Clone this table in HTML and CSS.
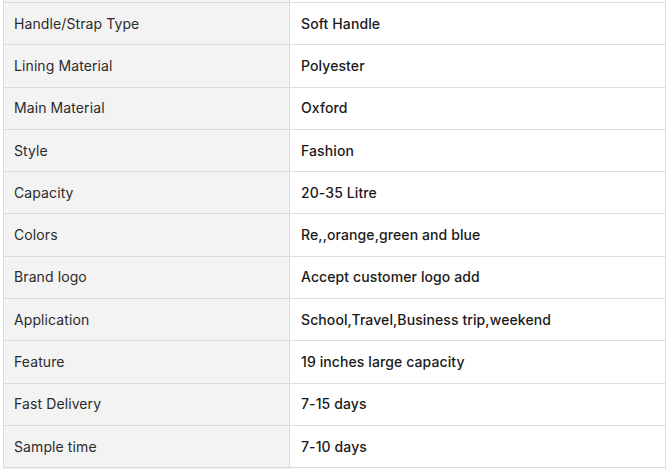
FILE: index.html
```html
<!DOCTYPE html>
<html>
<head>
<meta charset="utf-8">
<link rel="stylesheet" href="styles.css">
</head>
<body>
<div class="wrap">
<table class="specs">
<tbody>
<tr><td class="k"></td><td class="v"></td></tr>
<tr><td class="k">Handle/Strap Type</td><td class="v">Soft Handle</td></tr>
<tr><td class="k">Lining Material</td><td class="v">Polyester</td></tr>
<tr><td class="k">Main Material</td><td class="v">Oxford</td></tr>
<tr><td class="k">Style</td><td class="v">Fashion</td></tr>
<tr><td class="k">Capacity</td><td class="v">20-35 Litre</td></tr>
<tr><td class="k">Colors</td><td class="v">Re,,orange,green and blue</td></tr>
<tr><td class="k">Brand logo</td><td class="v">Accept customer logo add</td></tr>
<tr><td class="k">Application</td><td class="v">School,Travel,Business trip,weekend</td></tr>
<tr><td class="k">Feature</td><td class="v">19 inches large capacity</td></tr>
<tr><td class="k">Fast Delivery</td><td class="v">7-15 days</td></tr>
<tr><td class="k">Sample time</td><td class="v">7-10 days</td></tr>
<tr><td class="k"></td><td class="v"></td></tr>
</tbody>
</table>
</div>
</body>
</html>
```
FILE: styles.css
```css
html, body {
  margin: 0;
  padding: 0;
  background: #fff;
}
body {
  font-family: Inter, "Noto Sans", sans-serif;
  font-size: 14px;
  color: #2b2b2b;
  overflow: hidden;
  height: 469px;
}
.wrap {
  padding-left: 3px;
  margin-top: -40.3px;
}
.specs {
  border-collapse: collapse;
  width: 663px;
  table-layout: fixed;
}
.specs td {
  border: 1px solid #dcdcdc;
  height: 42.3px;
  padding: 0 10px;
  box-sizing: border-box;
  vertical-align: middle;
  line-height: 20px;
  letter-spacing: 0.1px;
}
.specs td.k {
  width: 286px;
  background: #f3f3f3;
}
.specs td.v {
  background: #fff;
  padding-left: 11px;
  font-weight: 500;
  color: #1a1a1a;
}
```
